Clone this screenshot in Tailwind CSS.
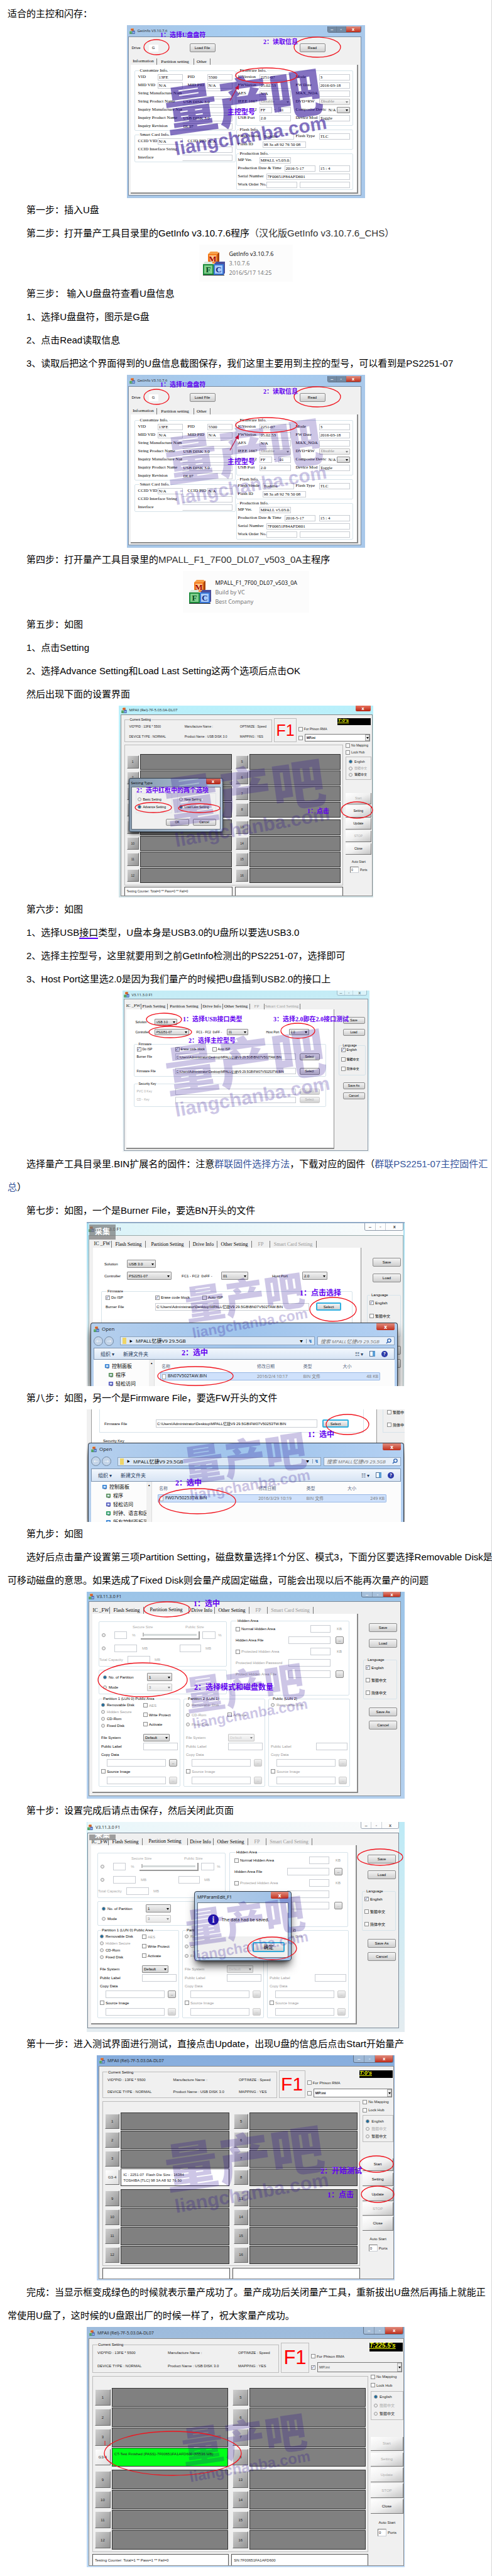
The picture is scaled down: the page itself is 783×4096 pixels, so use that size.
<!DOCTYPE html>
<html lang="zh-CN">
<head>
<meta charset="utf-8">
<meta name="viewport" content="width=device-width, initial-scale=1">
<title>量产教程</title>
<script src="https://cdn.jsdelivr.net/npm/@tailwindcss/browser@4"></script>
</head>
<body class="bg-white">
<main class="border-r border-[#d8d8d8] px-3 pt-[3px] pb-[14px] text-[15px] leading-[37px] text-black font-['Liberation_Sans','Noto_Sans_CJK_SC',sans-serif]">
  <p>适合的主控和闪存：</p>
  <figure id="getinfo-1" class="relative mx-auto h-[275px] w-[379px] overflow-hidden text-[7px] leading-none"></figure>
  <p class="indent-[30px]">第一步：插入U盘</p>
  <p class="indent-[30px]">第二步：打开量产工具目录里的GetInfo v3.10.7.6程序<span class="text-[#333]">（汉化版GetInfo v3.10.7.6_CHS）</span></p>
  <figure class="mx-auto flex h-[59px] w-[149px] items-center gap-[7px] bg-[#fcfcfc] pl-[6px] font-['Open_Sans',sans-serif] text-[9px] leading-[15px] text-[#707070]">
    <span data-icon class="block h-[38px] w-[35px]"></span>
    <figcaption class="whitespace-nowrap"><div class="text-black">GetInfo v3.10.7.6</div><div>3.10.7.6</div><div>2016/5/17 14:25</div></figcaption>
  </figure>
  <p class="indent-[30px]">第三步： 输入U盘盘符查看U盘信息</p>
  <p class="indent-[30px]">1、选择U盘盘符，图示是G盘</p>
  <p class="indent-[30px]">2、点击Read读取信息</p>
  <p class="indent-[30px]">3、读取后把这个界面得到的U盘信息截图保存，我们这里主要用到主控的型号，可以看到是PS2251-07</p>
  <figure id="getinfo-2" class="relative mx-auto h-[275px] w-[379px] overflow-hidden text-[7px] leading-none"></figure>
  <p class="indent-[30px]">第四步：打开量产工具目录里的<span class="text-[#333]">MPALL_F1_7F00_DL07_v503_0A</span>主程序</p>
  <figure class="mx-auto flex h-[66px] w-[201px] items-center gap-[7px] bg-[#fcfcfc] pl-[10px] font-['Open_Sans',sans-serif] text-[9px] leading-[15px] text-[#707070]">
    <span data-icon class="block h-[38px] w-[35px]"></span>
    <figcaption class="whitespace-nowrap"><div class="text-black">MPALL_F1_7F00_DL07_v503_0A</div><div>Build by VC</div><div>Best Company</div></figcaption>
  </figure>
  <p class="indent-[30px]">第五步：如图</p>
  <p class="indent-[30px]">1、点击Setting</p>
  <p class="indent-[30px]">2、选择Advance Setting和Load Last Setting这两个选项后点击OK</p>
  <p class="indent-[30px]">然后出现下面的设置界面</p>
  <figure id="mpall-1" class="relative mx-auto h-[305px] w-[405px] overflow-hidden text-[5px] leading-none"></figure>
  <p class="indent-[30px]">第六步：如图</p>
  <p class="indent-[30px]">1、选择USB<a href="#usb" class="border-b-2 border-[#5a00ff]">接口</a>类型，U盘本身是USB3.0的U盘所以要选USB3.0</p>
  <p class="indent-[30px]">2、选择主控型号，这里就要用到之前GetInfo检测出的PS2251-07，选择即可</p>
  <p class="indent-[30px]">3、Host Port这里选2.0是因为我们量产的时候把U盘插到USB2.0的接口上</p>
  <figure id="param-1" class="relative mx-auto h-[257px] w-[393px] overflow-hidden text-[5px] leading-none"></figure>
  <p class="-mr-3 indent-[30px]">选择量产工具目录里.BIN扩展名的固件：注意<a href="#firmware" class="text-[#35549b]">群联固件选择方法</a>，下载对应的固件（<a href="#list" class="text-[#35549b]">群联PS2251-07主控固件汇<br>总</a>）</p>
  <p class="indent-[30px]">第七步：如图，一个是Burner File，要选BN开头的文件</p>
  <figure id="param-2" class="relative mx-auto h-[261px] w-[506px] overflow-hidden text-[6px] leading-none"></figure>
  <p class="indent-[30px]">第八步：如图，另一个是Firmware File，要选FW开头的文件</p>
  <figure id="param-3" class="relative mx-auto h-[179px] w-[506px] overflow-hidden text-[6px] leading-none"></figure>
  <p class="indent-[30px]">第九步：如图</p>
  <p class="-mr-3 indent-[30px] whitespace-nowrap">选好后点击量产设置第三项Partition Setting，磁盘数量选择1个分区、模式3，下面分区要选择Removable Disk是<br>可移动磁盘的意思。如果选成了Fixed Disk则会量产成固定磁盘，可能会出现以后不能再次量产的问题</p>
  <figure id="part-1" class="relative mx-auto h-[329px] w-[506px] overflow-hidden text-[6px] leading-none"></figure>
  <p class="indent-[30px]">第十步：设置完成后请点击保存，然后关闭此页面</p>
  <figure id="part-2" class="relative mx-auto h-[334px] w-[506px] overflow-hidden text-[6px] leading-none"></figure>
  <p class="indent-[30px]">第十一步：进入测试界面进行测试，直接点击Update，出现U盘的信息后点击Start开始量产</p>
  <figure id="mpall-2" class="relative mx-auto h-[358px] w-[474px] overflow-hidden text-[6px] leading-none"></figure>
  <p class="-mr-3 indent-[30px]">完成：当显示框变成绿色的时候就表示量产成功了。量产成功后关闭量产工具，重新拔出U盘然后再插上就能正<br>常使用U盘了，这时候的U盘跟出厂的时候一样了，祝大家量产成功。</p>
  <figure id="mpall-3" class="relative mx-auto h-[382px] w-[506px] overflow-hidden text-[6px] leading-none"></figure>
</main>

<script>
/* ---------- shared pieces ---------- */
const icon = `<svg viewBox="0 0 35 38" class="block size-full" aria-hidden="true">
  <path d="M8 4 12 0h11l3 3v15H8z" fill="#f6a04a"/><rect x="8" y="4" width="15" height="15" fill="#f47a1c"/><rect x="10" y="6" width="11" height="11" fill="#ffc98a"/><path d="M23 4l3-3v14l-3 4z" fill="#a8430c"/>
  <path d="M0 20l3-4h12v22H0z" fill="#d8eadc"/><rect y="20" width="17" height="17" fill="#1e8c3c"/><rect x="2" y="22" width="13" height="13" fill="#7fcf8c"/>
  <path d="M18 20l3-4h14v18l-3 4H18z" fill="#4a4f9c"/><rect x="17" y="20" width="16" height="17" fill="#3a78d8"/><rect x="19" y="22" width="12" height="13" fill="#a9cbfa"/>
  <path d="M0 37h34v1H0z" fill="#222"/>
  <g font-family="Liberation Serif" font-weight="700" font-size="13" text-anchor="middle"><text x="15.500" y="16" fill="#a00000">M</text><text x="8.500" y="33" fill="#064d1c">F</text><text x="25" y="33" fill="#12267e">C</text></g></svg>`;

const inp = (cls, v = '', name = 'value') => `<input readonly aria-label="${name}" value="${v}" class="min-w-0 border border-[#c9cdd3] bg-white px-[1px] ${cls}">`;
const btn = (t, cls = '') => `<button type="button" class="min-w-0 rounded-[2px] border border-[#8c8c8c] bg-linear-to-b from-[#f4f4f4] to-[#cfcfcf] text-center whitespace-nowrap ${cls}">${t}</button>`;
const sel = (v, cls = '', name = v) => `<span class="relative block ${cls}"><select aria-label="${name}" class="block size-full appearance-none rounded-[1px] border border-[#8c8c8c] bg-linear-to-b from-[#f2f2f2] to-[#d2d2d2] pl-[2px]"><option>${v}</option></select><span class="pointer-events-none absolute top-1/2 right-[3px] -mt-px border-x-2 border-t-3 border-x-transparent border-t-black"></span></span>`;
const chk = (t, on = false, cls = '') => `<label class="flex items-center gap-[2px] whitespace-nowrap ${cls}"><input type="checkbox" ${on ? 'checked' : ''} class="size-[7px] shrink-0 appearance-none border border-[#8e8f8f] bg-[#f8f8f8] checked:after:block checked:after:text-[6px] checked:after:leading-[5px] checked:after:text-[#26348c] checked:after:content-['✓']">${t}</label>`;
const rad = (g, t, on = false, cls = '') => `<label class="flex items-center gap-[3px] whitespace-nowrap ${cls}"><input type="radio" name="${g}" ${on ? 'checked' : ''} class="size-[6px] shrink-0 appearance-none rounded-full border border-[#999] bg-[#eee] checked:bg-[#17699c]">${t}</label>`;
const group = (t, cls, body) => `<fieldset class="min-w-0 rounded-[2px] border border-[#d6e3ea] ${cls}"><legend class="ml-[2px] h-[7px] px-[1px] leading-[7px] whitespace-nowrap">${t}</legend>${body}</fieldset>`;
const pair = (l, field) => `<label class="contents"><span class="whitespace-nowrap">${l}</span>${field}</label>`;
const winButtons = (cls, closeCls = 'bg-linear-to-b from-[#e08a7c] to-[#c02a18] text-white', other = 'bg-[#a9bdd4]/70 text-white') => `<span class="flex self-start overflow-hidden rounded-b-[3px] border border-t-0 border-[#5f6f84] text-[7px] font-bold ${cls}"><button type="button" aria-label="最小化" class="flex-1 leading-none ${other}">‒</button><button type="button" aria-label="最大化" class="flex-1 border-x border-[#5f6f84]/50 leading-none ${other}">▫</button><button type="button" aria-label="关闭" class="flex-[1.7] leading-none ${closeCls}">x</button></span>`;
const title = (t, cls, right) => `<div class="flex items-center ${cls}"><span class="block h-[9px] w-[9px] shrink-0">${icon}</span><span class="ml-[4px] grow whitespace-nowrap text-[#222]">${t}</span>${right}</div>`;
const tabs = (active, cls, widths) => `<div class="flex font-['Liberation_Serif',serif] ${cls}">` + ['IC _FW', 'Flash Setting', 'Partition Setting', 'Drive Info', 'Other Setting', 'FP', 'Smart Card Setting'].map((t, i) => `<button type="button" class="border-r border-[#777] text-center whitespace-nowrap ${widths[i]} ${i === active ? 'pb-[2px]' : ''} ${i > 4 ? 'text-[#999]' : ''}">${t}</button>`).join('') + `</div>`;

/* ---------- annotations drawn over a window ---------- */
const mark = (x, y, w, o = .22) => `<svg x="${x}" y="${y}" width="${w}" height="${w * 140 / 253}" viewBox="0 0 253 140" overflow="visible" fill="#200090" opacity="${o}"><text transform="translate(1 101) rotate(-8)" font-family="Noto Sans CJK SC" font-weight="900" font-size="84">量产吧</text><text transform="translate(14 138) rotate(-10)" font-family="Liberation Sans" font-weight="700" font-size="30">liangchanba.com</text></svg>`;
const ring = (x, y, a, b) => `<ellipse cx="${x}" cy="${y}" rx="${a}" ry="${b}" fill="none" stroke="#f0141e" stroke-width="1.3"/>`;
const note = (x, y, s, t) => `<text x="${x}" y="${y}" font-size="${s}" font-weight="700" fill="#6200f0" font-family="Liberation Serif, Noto Sans CJK SC">${t}</text>`;
const over = (w, h, body) => `<svg viewBox="0 0 ${w} ${h}" class="pointer-events-none absolute inset-0 size-full">${body}</svg>`;
const put = (id, html) => { document.getElementById(id).innerHTML = html; };
document.querySelectorAll('[data-icon]').forEach(e => { e.innerHTML = icon; });

/* ---------- GetInfo ---------- */
const L4 = 'grid h-[13px] grid-cols-[31px_40px_8px_31px_40px] items-center';
const L2 = 'grid h-[13px] grid-cols-[70px_80px] items-center';
const R4 = 'grid h-[13px] grid-cols-[34px_50px_8px_37px_49px] items-center';
const F = 'h-[10px]';
const four = (c, a, b, d, e) => `<div class="${c}">${pair(a, inp(F, b, a))}<span></span>${pair(d, inp(F, e, d))}</div>`;
const two = (a, b) => `<div class="${L2}">${pair(a, inp('h-[10px] border-l-transparent', b, a))}</div>`;
const getinfo = o => `<div class="flex h-full flex-col bg-linear-to-r from-[#a8c6e6] via-[#a5cdf2] to-[#a9c8ea] pr-[6px] pb-[4px] pl-[2px]">
 ${title('GetInfo V3.10.7.6', "h-[18px] shrink-0 pl-[2px] font-['Open_Sans',sans-serif] text-[6px]", winButtons('mt-[2px] h-[10px] w-[54px]', undefined, 'bg-[#5c6f84]/70 text-white'))}
 <div class="grow border border-[#7b8ca0] bg-[#f0f0f0]">
  <div class="grid h-[34px] grid-cols-[27px_15px_50px_41px_134px_41px] items-center pl-[5px] font-['Liberation_Sans',sans-serif] text-[6px]">
   ${pair('Drive', inp('h-[11px] border-transparent text-center', 'G', 'Drive'))}<span></span>${btn('Load File', 'h-[14px]')}<span></span>${btn('Read', 'h-[14px] border-[#2aa3d0] bg-[#dfeaf0]')}
  </div>
  <div class="ml-[3px] flex h-[10px] font-['Liberation_Serif',serif] text-[7px]"><button type="button" class="w-[42px] border-r border-[#777] pb-[2px]">Information</button><button type="button" class="w-[59px] border-r border-[#777]">Partition setting</button><button type="button" class="w-[26px] border-r border-[#777]">Other</button></div>
  <div class="mr-[4px] ml-[3px] flex h-[205px] items-start gap-px border-r-2 border-b-2 border-[#8b8b8b] bg-white pt-[6px] pl-[6px] font-['Liberation_Serif',serif]">
   <div class="flex w-[161px] flex-col gap-[3px]">
    ${group('Customize Info.', 'pl-[5px]', four(L4, 'VID', '13FE', 'PID', '5500') + four(L4, 'MID VID', 'N/A', 'MID PID', 'N/A') + two('String Manufacture Nam', '') + two('String Product Name', 'USB DISK 3.0') + two('Inquiry Manufacture Nam', '') + two('Inquiry Product Name', 'USB DISK 3.0') + two('Inquiry Revision', 'DL07'))}
    ${group('Smart Card Info.', 'pl-[5px]', four(L4, 'CCID VID', 'N/A', 'CCID PID', 'N/A') + two('CCID Interface String', '') + two('Interface', ''))}
   </div>
   <div class="flex w-[186px] flex-col gap-[3px]">
    ${group('Firmware Info.', 'pb-[5px] pl-[2px]', four(R4, 'ICVersion', '2251-07', 'Mode', '3') + four(R4, 'FWVerion', '05.02.53', 'FW Date', '2016-03-18') + four(R4, 'AES', 'N/A', 'MAX_NOA', '')
     + `<div class="${R4}">${pair('IEEE 1667', sel('Disable', 'h-[10px] opacity-50', 'IEEE 1667'))}<span></span>${pair('DVD+RW', sel('Disable', 'h-[10px] opacity-50', 'DVD+RW'))}</div>`
     + `<div class="grid h-[13px] grid-cols-[34px_20px_10px_20px_8px_50px_15px_21px] items-center">${pair('FC1 - FC2', inp(F, 'FF', 'FC1'))}<span class="text-center">-</span>${inp(F, '01', 'FC2')}<span></span><span class="whitespace-nowrap">Composite Devic</span>${inp('h-[10px] border-transparent', 'N/A', 'Composite')}${sel('', 'h-[10px]', 'Composite Device')}</div>`
     + four(R4, 'USB Port', '2.0', 'Device Mod', 'Toggle'))}
    ${group('Flash Info.', 'pb-[1px] pl-[2px]', four('grid h-[13px] grid-cols-[39px_50px_3px_37px_49px] items-center', 'Flash Vende', 'Toshiba', 'Flash Type', 'TLC') + `<div class="grid h-[13px] grid-cols-[39px_69px] items-center">${pair('Flash ID', inp(F, '98 3a a8 92 76 50 08', 'Flash ID'))}</div>`)}
    ${group('Production Info.', 'pb-[1px] pl-[2px]', `<div class="grid h-[13px] grid-cols-[34px_50px] items-center">${pair('MP Ver.', inp(F, 'MPALL v5.03.0A', 'MP Ver.'))}</div><div class="grid h-[13px] grid-cols-[74px_49px_6px_49px] items-center">${pair('Production Date &amp; Time', inp(F, '2016-5-17', 'Date'))}<span></span>${inp(F, '15 : 4', 'Time')}</div><div class="grid h-[13px] grid-cols-[45px_133px] items-center">${pair('Serial Number', inp(F, '7F00651F84AFD601', 'Serial Number'))}</div><div class="grid h-[13px] grid-cols-[45px_49px_4px_80px] items-center">${pair('Work Order No.', inp(F, '', 'Work Order'))}<span></span>${inp(F, '', 'Work Order 2')}</div>`)}
   </div>
  </div>
 </div></div>` + over(379, 275, mark(64, 69, 253, o) + ring(47, 35, 20, 12) + ring(303, 35, 37, 16) + ring(222, 80, 49, 12) + `<path d="M164 120 175 100" stroke="#c0103c" stroke-width="1.200"/><path d="M178 95l-6 5 6 3z" fill="#c0103c"/>` + note(53, 19, 10, '1：选择U盘盘符') + note(217, 30, 10, '2：读取信息') + note(160, 142, 11, '主控型号'));
put('getinfo-1', getinfo(.55));
put('getinfo-2', getinfo(.22));

/* ---------- MPAll ---------- */
const cellRow = (a, b, o) => {
  const hot = a === 4 && o.hot;
  const port = 'min-w-0 my-[2px] border border-r-[#6c6c6c] border-b-[#6c6c6c] border-t-[#eee] border-l-[#eee] bg-linear-to-br text-center text-[#222]';
  return `<div class="grid min-h-0 grid-cols-[25fr_187fr_3fr_25fr_186fr] gap-x-[2px]"><button type="button" class="${port} ${hot ? 'from-[#fff] to-[#ddd]' : 'from-[#cfcfcf] to-[#939393]'}">${hot ? 'G3-4' : a}</button><div class="min-w-0 overflow-hidden border border-[#333] pl-[3px] whitespace-nowrap ${hot ? o.hotCls : 'bg-[#808080]'}">${hot ? o.hot : ''}</div><button type="button" class="${port} col-start-4 from-[#cfcfcf] to-[#939393]">${b}</button><div class="border border-[#333] bg-[#808080]"></div></div>`;
};
const sideBtn = (t, row, off) => `<button type="button" class="min-h-0 border-r border-b border-[#777] bg-linear-to-br from-[#fff] via-[#f0f0f0] to-[#c4c4c4] ${row} ${off ? 'text-[#aaa]' : 'text-black'}">${t}</button>`;
const mpall = o => `<div class="grid h-full grid-rows-[18fr_361fr_2fr] pr-[1px] pl-[3px] font-['Liberation_Sans','Noto_Sans_CJK_SC',sans-serif] ${o.frame}">
 ${title('MPAll (Rel)-7F-5.03.0A-DL07', `min-h-0 pl-[1px] font-['Open_Sans',sans-serif] ${o.titleSize}`, o.buttons)}
 <div class="grid min-h-0 grid-rows-[6fr_48fr_286fr_3fr_18fr] border border-[#8a8a8a] bg-[#f0f0f0] pl-[5px] text-[#222]">
  <div></div>
  <div class="grid min-h-0 grid-cols-[297fr_45fr_147fr] gap-x-[3px]">
   <fieldset class="min-w-0 border border-[#bdbdbd] pl-[7px]"><legend class="px-[1px] text-black">Current Setting</legend><div class="grid h-full grid-cols-[112fr_112fr_64fr] grid-rows-2 items-center whitespace-nowrap"><span>VID*PID : 13FE * 5500</span><span>Manufacture Name :</span><span>OPTIMIZE : Speed</span><span>DEVICE TYPE : NORMAL</span><span>Product Name : USB DISK 3.0</span><span>MAPPING : YES</span></div></fieldset>
   <div class="flex items-center justify-center border border-[#bdbdbd] text-[#f00] ${o.f1}">F1</div>
   <div class="grid min-h-0 grid-rows-[13fr_14fr_17fr] gap-y-px">
    <div class="mr-[1px] w-[53px] justify-self-end overflow-hidden bg-black font-bold whitespace-nowrap text-[#e8f000] italic underline ${o.timerCls}">${o.timer}</div>
    ${chk('For Phison RMA')}
    <div class="flex min-h-0 items-stretch gap-[3px]">${chk('', o.ini)}<span class="relative my-px mr-[2px] block grow"><select aria-label="配置文件" class="block size-full appearance-none border border-[#7a7a7a] pl-[2px] font-bold ${o.iniCls}"><option>MP.ini</option></select><span class="pointer-events-none absolute inset-y-px right-px flex w-[7px] items-center justify-center border border-[#aaa] bg-[#e8e8e8]"><span class="border-x-2 border-t-3 border-x-transparent border-t-black"></span></span></span></div>
   </div>
  </div>
  <div class="grid min-h-0 grid-cols-[438fr_52fr] gap-x-[4px]">
   <div class="grid min-h-0 grid-rows-[5fr_281fr]"><div></div>
    <div class="grid min-h-0 grid-rows-[18fr_127fr_5fr_128fr_3fr] border border-[#bdbdbd] px-[3px]">
     <div></div>
     <div class="grid min-h-0 grid-rows-4 gap-y-px">${[1, 2, 3, 4].map(i => cellRow(i, i + 4, o)).join('')}</div>
     <div></div>
     <div class="grid min-h-0 grid-rows-4 gap-y-px">${[9, 10, 11, 12].map(i => cellRow(i, i + 4, o)).join('')}</div>
    </div>
   </div>
   <div class="grid min-h-0 grid-rows-[13fr_14fr_2fr_46fr_27fr_22fr_3fr_23fr_2fr_23fr_2fr_23fr_2fr_23fr_11fr_10fr_3fr_12fr_25fr]">
    ${chk('No Mapping')}${chk('Lock Hub')}
    <div class="row-start-4 grid min-h-0 grid-rows-3 border border-[#bdbdbd] py-[2px] pl-[4px]">${rad(o.id, 'English', true)}${rad(o.id, '簡體中文', false, 'text-[#aaa]')}${rad(o.id, '繁體中文')}</div>
    ${sideBtn('Start', 'row-start-6', o.off !== 0)}${sideBtn('Setting', 'row-start-8', o.off === 2)}${sideBtn('Update', 'row-start-10', o.off === 2)}${sideBtn('STOP', 'row-start-12', true)}${sideBtn('Close', 'row-start-14', false)}
    <span class="row-start-16 text-center">Auto Start</span>
    <label class="row-start-18 flex min-h-0 items-center justify-center gap-[2px]">${inp('h-full w-[14px] border-t-[#777] border-l-[#777]', '0', 'Ports')}Ports</label>
   </div>
  </div>
  <div></div>
  <div class="grid min-h-0 grid-cols-[216fr_216fr_52fr] gap-x-[4px] whitespace-nowrap"><div class="flex items-center border border-b-0 border-[#555] bg-white pl-[3px]">${o.count}</div><div class="flex items-center border border-b-0 border-[#555] bg-white pl-[3px]">${o.sn}</div></div>
 </div></div>`;

put('mpall-1', mpall({ id: 'm1', frame: 'bg-linear-to-b from-[#b9f0fb] to-[#cfe0e4]', titleSize: 'text-[6px]', f1: 'text-[25px]', timer: "T:0's", timerCls: 'text-[8px]', ini: false, iniCls: 'bg-white', off: 1, count: 'Testing Counter: Total=0 ** Pass=0 ** Fail=0', sn: '',
  buttons: `<button type="button" aria-label="关闭" class="mr-[3px] h-[9px] w-[24px] self-start rounded-b-[2px] bg-linear-to-b from-[#e8705c] to-[#b82010] text-[7px] leading-none font-bold text-white">x</button>` })
 + `<div class="absolute top-[115px] left-[16px] flex h-[86px] w-[150px] flex-col rounded-[3px] border border-[#36414d] bg-linear-to-r from-[#8599ad] to-[#b4c9de] px-[3px] pb-[3px] font-['Liberation_Sans',sans-serif] text-[5px] shadow-md shadow-black/60">
  <div class="flex h-[13px] items-center justify-between font-['Open_Sans',sans-serif] text-[6px]">Setting Type<button type="button" aria-label="关闭" class="h-[9px] w-[23px] self-start rounded-b-[2px] bg-linear-to-b from-[#d96a5c] to-[#b01c10] text-[7px] leading-none font-bold text-white">x</button></div>
  <div class="grow border border-[#65717d] bg-[#f0f0f0] px-[6px] pt-[9px]">
   <div class="flex gap-[8px]"><div class="flex h-[32px] w-[60px] flex-col justify-evenly border border-[#e0e4e8] pl-[2px]">${rad('t1', 'Basic Setting')}${rad('t1', 'Advance Setting', true)}</div><div class="flex h-[32px] w-[64px] flex-col justify-evenly border border-[#e0e4e8] pl-[2px]">${rad('t2', 'New Setting')}${rad('t2', 'Load Last Setting', true)}</div></div>
   <div class="mt-[9px] flex justify-end gap-[6px]">${btn('OK', 'h-[11px] w-[37px] border-[#2aa3d0]')}${btn('Cancel', 'h-[11px] w-[37px]')}</div>
  </div></div>`
 + over(405, 305, mark(77, 84, 258) + ring(379, 166, 25, 13) + ring(55, 162, 29, 8) + ring(128, 163, 33, 7) + note(300, 171, 10, '1：点击') + note(28, 138, 10, '2：选中红框中的两个选项')));
const threeBtn = winButtons('mr-[1px] h-[12px] w-[64px]');
put('mpall-2', mpall({ id: 'm2', frame: 'bg-linear-to-b from-[#86addd] to-[#bcd5f2]', titleSize: 'text-[7px]', f1: 'text-[30px]', timer: "T:0's", timerCls: 'text-[9px]', ini: false, iniCls: 'bg-white', off: 0, count: '', sn: '', buttons: threeBtn,
  hot: 'IC : 2251-07&nbsp; Flash Die Size : 16384<br>TOSHIBA [TLC] 98 3A A8 92 76 50', hotCls: 'bg-white pt-[5px] leading-[9px]' })
 + over(474, 358, mark(112, 111, 256) + ring(445, 173, 27, 13) + ring(447, 221, 26, 13) + note(356, 188, 12, '2：开始测试') + note(367, 226, 12, '1：点击')));
put('mpall-3', mpall({ id: 'm3', frame: 'bg-linear-to-b from-[#9dbbdc] to-[#bcd8f4]', titleSize: 'text-[7px]', f1: 'text-[31px]', timer: "T:225.5's", timerCls: 'text-[10px]', ini: true, iniCls: 'bg-[#f0f0f0] text-[#777]', off: 2, count: 'Testing Counter: Total=1 ** Pass=1 ** Fail=0', sn: 'SN:7F00651FA1AFD600', buttons: threeBtn,
  hot: 'CT-Test Finished (PASS)-7F00651FA1AFD600 (65536 MB)', hotCls: 'bg-[#00ff18] pt-[6px]' })
 + over(506, 382, mark(154, 137, 201) + ring(137, 201, 109, 35) + `<path d="M29 181v7" stroke="#f0141e"/>`));

/* ---------- MPParamEdit ---------- */
const side = (o) => `<div class="flex shrink-0 flex-col ${o.cls}">${btn('Save', o.b + ' ' + (o.save || ''))}${btn('Load', o.b + ' ' + o.g1)}${group('Language', o.lang, chk('English', true) + chk('繁體中文') + chk('简体中文'))}${btn('Save As', o.b + ' ' + o.g2)}${btn('Cancel', o.b + ' ' + o.g3)}</div>`;
const path = f => `C:\\Users\\Administrator\\Desktop\\MPALL忆捷V9 29.5GB\\${f}.BIN`;

put('param-1', `<div class="flex h-full flex-col bg-linear-to-b from-[#c4ecf6] to-[#f2f6f8] px-[2px] pb-[2px] font-['Liberation_Sans','Noto_Sans_CJK_SC',sans-serif]">
 ${title('V3.11.3.0 F1', "h-[13px] shrink-0 font-['Open_Sans',sans-serif] text-[6px]", winButtons('mr-[2px] h-[8px] w-[48px] opacity-40', 'bg-white text-black', 'bg-white text-black'))}
 <div class="flex grow border border-[#8a98a5] bg-[#f0f0f0] pt-[7px] pl-[3px]">
  <div class="w-[331px] shrink-0">
   ${tabs(0, 'h-[9px] text-[7px]', ['w-[24px]', 'w-[42px]', 'w-[54px]', 'w-[34px]', 'w-[43px]', 'w-[23px]', 'w-[57px]'])}
   <div class="h-[222px] border-r border-b-2 border-[#8b8b8b] bg-white px-[12px] pt-[12px]">
    <div class="grid h-[16px] grid-cols-[30px_36px] items-center pl-[3px]">${pair('Solution', sel('USB 3.0', 'h-[10px]'))}</div>
    <div class="grid h-[16px] grid-cols-[30px_55px_12px_48px_34px_29px_36px_32px] items-center pl-[3px] whitespace-nowrap">${pair('Controller', sel('PS2251-07', 'h-[10px]'))}<span></span><span>FC1 - FC2&nbsp; 0xFF -</span>${sel('01', 'h-[10px]')}<span></span>${pair('Host Port', sel('2.0', 'h-[10px]'))}</div>
    ${group('Firmware', 'mt-[8px] h-[55px] px-[4px]', `<div class="grid h-[8px] grid-cols-[61px_59px_50px]">${chk('Do ISP', true)}${chk('Erase code block', true)}${chk('Auto ISP')}</div><div class="mt-[1px] grid h-[14px] grid-cols-[61px_192px_6px_32px] items-center">${pair('Burner File', inp('h-[10px]', path('BN07V502TAW'), 'Burner File'))}<span></span>${btn('Select', 'h-[11px]')}</div><div class="mt-[9px] grid h-[14px] grid-cols-[61px_192px_6px_32px] items-center">${pair('Firmware File', inp('h-[10px]', path('FW07V50253TW'), 'Firmware File'))}<span></span>${btn('Select', 'h-[11px]')}</div>`)}
    ${group('Security Key', 'mt-[8px] h-[40px] px-[4px] pt-[2px]', ['PVC 0 Key', 'CD - Key'].map(t => `<div class="grid h-[13px] grid-cols-[61px_192px_6px_32px] items-center text-[#aaa]">${pair(t, inp('h-[10px] border-[#aaa]', '', t))}<span></span>${btn('Select', 'h-[10px] border-[#ccc]')}</div>`).join(''))}
   </div>
  </div>
  ${side({ cls: 'ml-[7px] w-[43px] pt-[21px]', b: 'h-[11px] ml-[7px] w-[35px]', g1: 'mt-[8px]', lang: 'mt-[12px] h-[51px] pl-[3px] flex flex-col gap-[8px]', g2: 'mt-[11px]', g3: 'mt-[5px]' })}
 </div></div>` + over(393, 257, mark(71, 60, 258) + ring(66, 46, 28, 10) + ring(76, 66, 34, 9) + ring(279, 64, 27, 12) + note(96, 49, 10, '1：选择USB接口类型') + note(105, 83, 10, '2：选择主控型号') + note(240, 49, 10, '3：选择2.0即在2.0接口测试')));

/* file chooser that lies over the settings window */
const small = c => `<svg viewBox="0 0 10 10" class="size-[9px] shrink-0"><rect x="1" y="1" width="8" height="7" rx="1" fill="${c}"/><path d="M3 3h4v3H3z" fill="#dce9f8"/><path d="M4 8h4v1H4z" fill="#556"/></svg>`;
const opener = o => `<div class="absolute bottom-0 flex flex-col overflow-hidden rounded-t-[4px] border border-b-0 border-[#333d49] bg-linear-to-r from-[#b5cfed] via-[#9fc4ec] to-[#b3d0f2] px-[4px] font-['Open_Sans','Noto_Sans_CJK_SC',sans-serif] text-[7px] shadow-lg shadow-black ${o.box}">
 ${title('Open', 'h-[18px] shrink-0 text-[8px]', `<button type="button" aria-label="关闭" class="h-[11px] w-[29px] self-start rounded-b-[2px] bg-linear-to-b from-[#e08a7c] to-[#c02a18] text-[8px] leading-none font-bold text-white">x</button>`)}
 <div class="flex shrink-0 items-center pb-[1px] ${o.nav}">
  <button type="button" aria-label="后退" class="size-[15px] rounded-full border border-[#6f86a0] bg-[#c3d4e8] text-[#fff]">←</button><button type="button" aria-label="前进" class="ml-[2px] size-[15px] rounded-full border border-[#6f86a0] bg-[#c3d4e8] text-[#fff]">→</button>
  <div class="ml-[10px] flex h-[14px] grow items-center gap-[5px] border border-[#8ba2bd] bg-[#dbe8f6] px-[3px]"><span class="h-[10px] w-[6px] bg-[#efd566]"></span><span class="text-[5px]">▶</span><span class="grow text-[8px]">MPALL忆捷V9 29.5GB</span><span class="text-[5px]">▼</span><span class="border-l border-[#8ba2bd] pl-[3px] font-bold text-[#2068b8]">↯</span></div>
  <label class="ml-[4px] flex h-[14px] w-[123px] items-center border border-[#8ba2bd] bg-[#e8f0fa] px-[4px]"><input type="search" aria-label="搜索" placeholder="搜索 MPALL忆捷V9 29.5GB" class="min-w-0 grow text-[8px] italic placeholder:text-[#777]"><svg viewBox="0 0 10 10" class="size-[9px]" fill="none" stroke="#2a5fae" stroke-width="1.500"><circle cx="6" cy="4" r="3"/><path d="M4 6 1 9"/></svg></label>
 </div>
 <div class="flex shrink-0 items-center border border-[#7d93ae] bg-linear-to-b from-[#f2f7fd] to-[#d7e4f4] px-[10px] text-[8px] text-[#1e395b] ${o.bar}"><button type="button">组织 ▾</button><button type="button" class="ml-[14px] grow text-left">新建文件夹</button><button type="button" aria-label="视图">☷ ▾</button><button type="button" aria-label="预览" class="mx-[10px] size-[9px] border border-[#4f6f96] border-r-4 border-r-[#5aa0d8] bg-white"></button><button type="button" aria-label="帮助" class="size-[10px] rounded-full bg-[#2b3aa8] text-[7px] leading-none font-bold text-white">?</button></div>
 <div class="flex grow overflow-hidden bg-[#fcfcfc]">
  <ul class="w-[88px] shrink-0 overflow-hidden pl-[17px] text-[8px] whitespace-nowrap ${o.tree}">${o.items.map((t, i) => `<li class="flex items-center gap-[3px] ${i ? 'pl-[6px]' : ''}">${small(['#3d87d6', '#5f9560', '#5a5fc0', '#2f9c62', '#3d87d6'][i])}${t}</li>`).join('')}</ul>
  <div class="w-[9px] shrink-0 border-r border-[#ddd] bg-[#f0f0f0] pt-[3px] text-center text-[5px]">▴</div>
  <table class="ml-[9px] h-fit table-fixed border-separate border-spacing-0 text-left ${o.table}"><thead><tr class="h-[20px] text-[#5a6b85]"><th class="w-[44%] pl-[2px] font-normal">名称</th><th class="w-[21%] font-normal">修改日期</th><th class="w-[18%] font-normal">类型</th><th class="w-[17%] font-normal">大小</th></tr></thead><tbody><tr class="h-[13px] bg-[#cfe1fb] text-[#777]"><td class="rounded-l-[2px] border-y border-l border-[#98b8e6] text-black"><span class="mr-[3px] ml-[2px] inline-block h-[8px] w-[6px] border border-[#aaa] bg-white align-middle"></span>${o.file}</td><td class="border-y border-[#98b8e6] whitespace-nowrap">${o.date}</td><td class="border-y border-[#98b8e6]">BIN 文件</td><td class="rounded-r-[2px] border-y border-r border-[#98b8e6] pr-[2px] text-right whitespace-nowrap">${o.size}</td></tr></tbody></table>
 </div></div>`;

put('param-2', `<div class="flex h-full flex-col border-t-2 border-[#8fa9c6] bg-linear-to-b from-[#9fdcf0] to-[#f2f6f8] pr-[2px] pl-[3px] font-['Liberation_Sans','Noto_Sans_CJK_SC',sans-serif]">
 ${title('V3.11.3.0 F1', "h-[19px] shrink-0 bg-linear-to-r from-[#d8f2f8] to-[#fbfbfb] font-['Open_Sans',sans-serif] text-[7px]", winButtons('h-[12px] w-[62px] opacity-70', 'bg-white text-black', 'bg-white text-black'))}
 <div class="flex grow border border-[#9aa] bg-[#f0f0f0] pt-[8px] pl-[6px]">
  <div class="w-[427px] shrink-0">
   ${tabs(0, 'h-[11px] text-[8px]', ['w-[30px]', 'w-[54px]', 'w-[70px]', 'w-[44px]', 'w-[55px]', 'w-[29px]', 'w-[74px]'])}
   <div class="h-[232px] border-r border-[#8b8b8b] bg-white px-[13px] pt-[16px]">
    <div class="grid h-[19px] grid-cols-[36px_46px] items-center pl-[5px]">${pair('Solution', sel('USB 3.0', 'h-[13px]'))}</div>
    <div class="grid h-[19px] grid-cols-[36px_71px_16px_63px_43px_38px_48px_40px] items-center pl-[5px] whitespace-nowrap">${pair('Controller', sel('PS2251-07', 'h-[13px]'))}<span></span><span>FC1 - FC2&nbsp; 0xFF -</span>${sel('01', 'h-[13px]')}<span></span>${pair('Host Port', sel('2.0', 'h-[13px]'))}</div>
    ${group('Firmware', 'mt-[12px] h-[80px] px-[6px]', `<div class="grid h-[12px] grid-cols-[79px_75px_60px]">${chk('Do ISP', true)}${chk('Erase code block', true)}${chk('Auto ISP')}</div><div class="grid h-[17px] grid-cols-[79px_245px_11px_40px] items-center">${pair('Burner File', inp('h-[12px]', path('BN07V502TAW'), 'Burner File'))}<span></span>${btn('Select', 'h-[13px] border-2 border-[#30b0e0]')}</div>`)}
   </div>
  </div>
  ${side({ cls: 'ml-[9px] w-[54px] pt-[27px]', b: 'h-[14px] ml-[9px] w-[45px]', g1: 'mt-[11px]', lang: 'mt-[17px] h-[70px] pl-[3px] pt-[5px] flex flex-col gap-[14px]', g2: 'mt-[14px]', g3: 'mt-[7px]' })}
 </div></div>
 <div class="absolute top-[4px] left-[4px] flex h-[24px] w-[42px] items-center justify-center bg-[#777]/70 text-[12px] font-bold text-white">采集</div>`
 + opener({ box: 'left-[6px] h-[101px] w-[489px]', nav: 'h-[21px]', bar: 'h-[19px]', tree: 'pt-[3px] leading-[14px]', table: 'w-[350px]', items: ['控制面板', '程序', '轻松访问'], file: 'BN07V502TAW.BIN', date: '2016/2/4 10:17', size: '48 KB' })
 + over(506, 261, mark(159, 80, 192) + ring(392, 139, 37, 19) + ring(173, 245, 60, 15) + note(339, 117, 12, '1：点击选择') + note(151, 212, 12, '2：选中')));

put('param-3', `<div class="flex h-full bg-[#f0f0f0] pl-[7px] font-['Liberation_Sans','Noto_Sans_CJK_SC',sans-serif]">
 <div class="w-[455px] border-x border-[#999] bg-white pl-[20px]">
  <div class="mr-[20px] ml-[-8px] h-[37px] border-x border-b border-[#d6e3ea] pt-[15px] pl-[7px]"><div class="grid h-[15px] grid-cols-[82px_257px_8px_42px] items-center">${pair('Firmware File', inp('h-[13px]', path('FW07V50253TW'), 'Firmware File'))}<span></span>${btn('Select', 'h-[13px] border-2 border-[#30b0e0]')}</div></div>
  <p class="mt-[10px] ml-[-2px]">Security Key</p>
 </div>
 <div class="ml-[9px] flex h-[37px] grow flex-col gap-[13px] overflow-hidden border-b border-l border-[#d6e3ea] pt-[1px] pl-[6px]">${chk('繁體中')}${chk('简体中')}</div></div>`
 + opener({ box: 'left-[2px] h-[126px] w-[503px]', nav: 'h-[22px]', bar: 'h-[21px]', tree: 'pt-[1px] leading-[14px]', table: 'w-[364px]', items: ['控制面板', '程序', '轻松访问', '时钟、语言和区', '所有控制面板项'], file: 'FW07V50253TW.BIN', date: '2016/3/29 10:19', size: '249 KB' })
 + over(506, 179, mark(155, 36, 200) + ring(415, 24, 34, 16) + ring(176, 146, 61, 20) + note(352, 44, 12, '1：选中') + note(141, 121, 12, '2：选中')));

/* partition page */
const H = 'h-[12px]';
const dots = off => btn('..', off ? 'h-[12px] w-[13px] border-[#ccc] text-[#aaa]' : 'h-[12px] w-[13px]');
const lun = (t, mode, cls, radios) => {
  const off = mode ? 'text-[#999]' : '';
  const b = mode ? 'border-[#999]' : '';
  return group(t, `h-[143px] px-[3px] ${cls}`, `<div class="h-[51px] pt-[3px] ${off}">${radios}</div>
   ${mode === 2 ? '<div class="h-[14px]"></div>' : `<div class="grid h-[14px] grid-cols-[67px_42px] items-center ${off}">${pair('File System', sel('Default', mode ? 'h-[12px] opacity-50' : H, 'File System'))}</div>`}
   <div class="grid h-[14px] items-center ${off} ${mode === 2 ? 'grid-cols-[72px_50px]' : 'grid-cols-[67px_55px]'}">${pair('Public Label', inp('h-[12px] ' + b, '', 'Public Label'))}</div>
   <p class="h-[12px] leading-[12px] ${off}">Copy Data</p>
   <div class="flex h-[13px] items-center gap-[5px] pl-[9px] ${off}">${inp('h-[12px] w-[94px] ' + b, '', 'Copy Data')}${dots(mode)}</div>
   <div class="flex h-[15px] items-center ${off}">${chk('Source Image')}</div>
   <div class="flex h-[13px] items-center gap-[5px] pl-[9px] ${off}">${inp('h-[12px] w-[94px] border-[#999]', '', 'Source Image')}${dots(1)}</div>`);
};
const partition = o => `<div class="flex h-full flex-col font-['Liberation_Sans','Noto_Sans_CJK_SC',sans-serif] ${o.frame}">
 ${title('V3.11.3.0 F1', `shrink-0 font-['Open_Sans',sans-serif] text-[7px] ${o.title}`, o.buttons)}
 <div class="flex grow border border-[#7d8a98] bg-[#f0f0f0] pt-[8px] pl-[5px]">
  <div class="w-[423px] shrink-0">
   ${tabs(2, 'h-[11px] text-[8px]', ['w-[28px]', 'w-[54px]', 'w-[72px]', 'w-[41px]', 'w-[55px]', 'w-[29px]', 'w-[73px]'])}
   <div class="h-[285px] border-r-2 border-b-2 border-[#8b8b8b] bg-white pt-[8px] pl-[10px]">
    <div class="flex h-[124px] gap-[6px]">
     <div class="w-[204px] shrink-0">
      <div class="mt-[4px] h-[72px] rounded-[2px] border border-[#d6e3ea] pt-[4px] text-[#aaa]">
       <div class="flex h-[8px] items-center pl-[53px]"><span class="w-[84px]">Secure Size</span><span>Public Size</span></div>
       <div class="grid h-[18px] grid-cols-[20px_20px_22px_94px_4px_21px_14px] items-center pl-[4px]">${rad(o.id + 'a', '')}${inp('h-[12px] border-[#aaa]', '', 'Secure %')}<span class="text-center">%</span><span class="flex h-[13px] items-center border-r-2 border-b-2 border-[#999] px-[3px]"><input type="range" aria-label="容量比例" value="0" class="h-[3px] w-full appearance-none bg-[#d4dada] [&::-webkit-slider-thumb]:h-[6px] [&::-webkit-slider-thumb]:w-[2px] [&::-webkit-slider-thumb]:appearance-none [&::-webkit-slider-thumb]:bg-[#bbb]"></span><span></span>${inp('h-[12px] border-[#aaa]', '', 'Public %')}<span class="text-center">%</span></div>
       <div class="mt-[3px] grid h-[18px] grid-cols-[20px_36px_8px_60px_34px_7px_14px] items-center pl-[4px]">${rad(o.id + 'a', '')}${inp('h-[12px] border-[#aaa]', '', 'Secure MB')}<span></span><span>MB</span>${inp('h-[12px] border-[#aaa]', '', 'Public MB')}<span></span><span>MB</span></div>
       <div class="grid h-[17px] grid-cols-[45px_36px_7px_20px] items-center">${pair('Total Capacity', inp('h-[12px] border-[#aaa]', '', 'Total Capacity'))}<span></span><span>MB</span></div>
      </div>
      <div class="mt-[5px] flex h-[39px] flex-col justify-evenly rounded-[2px] border border-[#d6e3ea] pl-[6px]"><div class="grid grid-cols-[70px_40px] items-center">${rad(o.id + 'b', 'No. of Partition', true)}${sel('1', 'h-[13px]', 'No. of Partition')}</div><div class="grid grid-cols-[70px_40px] items-center">${rad(o.id + 'b', 'Mode')}${sel('3', 'h-[12px] opacity-50', 'Mode')}</div></div>
     </div>
     ${group('Hidden Area', 'h-[122px] w-[189px] pl-[7px]', `<div class="grid h-[18px] grid-cols-[119px_32px_10px_14px] items-center">${chk('Normal Hidden Area')}${inp('h-[12px] border-[#aaa]', '', 'Normal Hidden Area')}<span></span><span class="text-[#999]">KB</span></div><div class="grid h-[18px] grid-cols-[84px_67px_8px_14px] items-center">${pair('Hidden Area File', inp(H, '', 'Hidden Area File'))}<span></span>${dots(0)}</div><div class="grid h-[18px] grid-cols-[119px_32px_10px_14px] items-center text-[#999]">${chk('Protected Hidden Area')}${inp('h-[12px] border-[#aaa]', '', 'Protected Hidden Area')}<span></span><span>KB</span></div><div class="grid h-[18px] grid-cols-[84px_67px] items-center text-[#999]">${pair('Protected Hidden Password', inp('h-[12px] border-[#aaa]', '', 'Password'))}</div><div class="grid h-[18px] grid-cols-[84px_67px_8px_14px] items-center text-[#999]">${pair('Protect Hidden Area File', inp('h-[12px] border-[#aaa]', '', 'Protect File'))}<span></span>${dots(0)}</div>`)}
    </div>
    <div class="flex gap-[5px]">
     ${lun('Partition 1 (LUN 0) Public Area', 0, 'w-[130px]', `<div class="grid grid-cols-[67px_50px]"><div class="flex flex-col gap-[5px]">${rad(o.id + 'c', 'Removable Disk', true)}${rad(o.id + 'c', 'Hidden Secure', false, 'text-[#999]')}${rad(o.id + 'c', 'CD-Rom')}${rad(o.id + 'c', 'Fixed Disk')}</div><div class="flex flex-col gap-[8px]">${chk('AES', false, 'text-[#999]')}${chk('Write Protect')}${chk('Activate')}</div></div>`)}
     ${lun('Partition 2 (LUN 1)', 1, 'w-[130px]', `<div class="grid grid-cols-[66px_50px] gap-y-[9px]">${rad(o.id + 'd', 'Removable Disk')}<span></span>${rad(o.id + 'd', 'CD-Rom')}${chk('Activate')}${rad(o.id + 'd', 'Fixed Disk')}</div>`)}
     ${lun('Public (LUN 2)', 2, 'w-[130px]', rad(o.id + 'e', 'Removable Disk'))}
    </div>
   </div>
  </div>
  ${side({ cls: 'ml-[8px] w-[54px] pt-[26px]', b: 'h-[14px] ml-[9px] w-[45px]', save: o.save, g1: 'mt-[11px]', lang: 'mt-[16px] h-[66px] pl-[3px] pt-[5px] flex flex-col gap-[13px]', g2: 'mt-[13px]', g3: 'mt-[7px]' })}
 </div></div>`;

put('part-1', partition({ id: 'p1', frame: 'bg-linear-to-b from-[#9cc4e8] to-[#b4d0ee] pr-[6px] pb-[4px] pl-[3px]', title: 'h-[15px]', buttons: winButtons('h-[9px] w-[63px]') })
 + over(506, 329, mark(159, 113, 192) + ring(128, 28, 37, 12) + ring(89, 140, 71, 27) + note(170, 23, 12, '1：选中') + note(171, 156, 12, '2：选择模式和磁盘数量')));
put('part-2', partition({ id: 'p2', frame: 'bg-linear-to-b from-[#bdeaf6] to-[#e4ecf0] pr-[9px] pb-[6px] pl-px', title: 'h-[17px] bg-linear-to-r from-[#e8f6fa] to-[#fafafa]', buttons: winButtons('h-[11px] w-[61px] opacity-60', 'bg-white text-black', 'bg-white text-black'), save: 'border-[#4aa0cc] from-[#eaf6fd] to-[#b4dcf4]' })
 + `<div class="absolute top-[20px] left-[4px] h-[9px] w-[42px] overflow-hidden bg-[#888]/80 text-center text-[12px] leading-none font-bold text-white"><span class="block leading-[2px]">采集</span></div>
 <div role="dialog" aria-label="MPParamEdit_F1" class="absolute top-[110px] left-[171px] flex h-[111px] w-[155px] flex-col rounded-[4px] border border-[#333d49] bg-linear-to-r from-[#b8cfe8] to-[#9cbfe6] px-[4px] pb-[4px] font-['Open_Sans','Noto_Sans_CJK_SC',sans-serif] text-[7px] shadow-lg shadow-black/70">
  <div class="flex h-[17px] items-center justify-between">MPParamEdit_F1<button type="button" aria-label="关闭" class="h-[11px] w-[28px] self-start rounded-b-[2px] bg-linear-to-b from-[#e08a7c] to-[#c02a18] text-[8px] leading-none font-bold text-white">x</button></div>
  <div class="flex grow flex-col border border-[#65717d] bg-white"><div class="flex grow items-center gap-[5px] pl-[16px]"><span class="flex size-[17px] items-center justify-center rounded-full bg-[#2418b0] font-['Liberation_Serif',serif] text-[14px] font-bold text-white">i</span>The data had be saved.</div><div class="flex h-[33px] items-center justify-end bg-[#f0f0f0] pr-[5px]">${btn('确定', 'h-[16px] w-[51px] border-2 border-[#30a8d8] text-[8px]')}</div></div></div>`
 + over(506, 334, mark(160, 117, 192) + ring(467, 56, 36, 13) + ring(295, 201, 39, 18)));
</script>
</body>
</html>
